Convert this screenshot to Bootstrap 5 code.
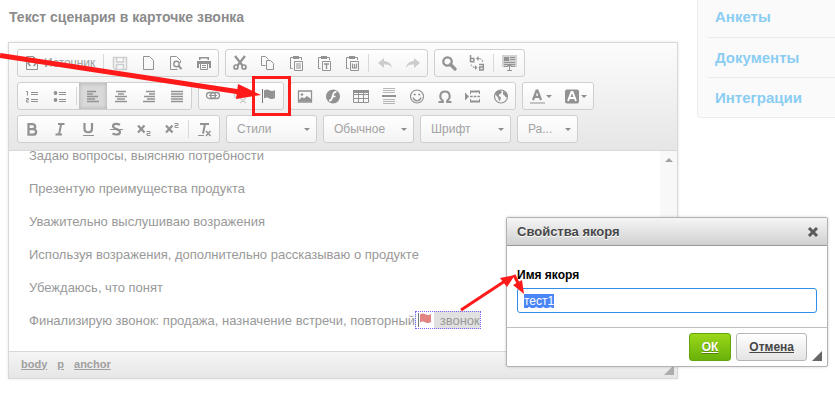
<!DOCTYPE html>
<html lang="ru">
<head>
<meta charset="utf-8">
<meta name="viewport" content="width=device-width, initial-scale=1">
<title>Текст сценария</title>
<link href="https://cdn.jsdelivr.net/npm/bootstrap@5.3.0/dist/css/bootstrap.min.css" rel="stylesheet">
<style>
body{font-family:"Liberation Sans",Arial,sans-serif;font-size:13px;line-height:20px;color:#999;background:#fff;overflow:hidden}
.scene{gap:19px;padding-left:8px;min-height:400px}
.page-title{font-size:14px;line-height:20px;font-weight:700;color:#8c8c8c;margin:7px 0 15px 1px}
.editor{border:1px solid #d8d8d8;box-shadow:0 0 3px rgba(0,0,0,.1)}
.tools{background:linear-gradient(#fcfcfc,#e6e6e6);border-bottom:1px solid #d8d8d8;padding:6px 8px 7px;row-gap:5px}
.tool-row{gap:6px}
.tool-group{display:flex;align-items:center;height:28px;border:1px solid #cfcfcf;border-radius:3px;background:linear-gradient(#fff,#f3f3f3);overflow:hidden}
.tool{border:0;padding:0 6px;height:26px;background:none;color:#929292;display:flex;align-items:center;font-size:12px}
.tool svg{width:16px;height:16px;flex:none}
.tool.active-tool{background:#d9d9d9;box-shadow:inset 0 0 4px #aaa}
.tool.faded{color:#cdcdcd}
.tool.source-tool{gap:4px;width:83px;color:#a0a0a0}
.source-tool svg{color:#929292}
.tool-sep{width:1px;height:18px;background:#d9d9d9;margin:0 2px}
.tool .caret,.combo .caret{width:0;height:0;border:3px solid transparent;border-top-color:#8e8e8e;border-bottom:0}
.tool.color-tool{gap:1px;width:35px}
.combo{width:91px;height:28px;border:1px solid #cfcfcf;border-radius:3px;background:linear-gradient(#fff,#f3f3f3);color:#a3a3a3;padding:0 6px 0 10px;font-size:12px}
.combo.combo-short{width:61px}
.writing{height:200px;padding-left:20px;background:#fff}
.lines{margin-top:-5px}
.lines p{margin:0 0 13px}
.anchor-mark{border:1px dotted #7565ff;color:#999;padding-top:1px;background:linear-gradient(90deg,#fff 18px,#e1e1e1 18px)}
.anchor-mark svg{width:16px;height:16px;vertical-align:-3px;margin:0 3px 0 1px;color:#e28484}
.track{width:17px;background:#f8f8f8;padding-top:7px}
.track i{width:0;height:0;border:4px solid transparent;border-bottom-color:#a3a3a3;border-top:0}
.path-bar{height:27px;border-top:1px solid #d8d8d8;background:linear-gradient(#f5f5f5,#e6e6e6);padding:0 3px 3px 12px;font-size:11px;font-weight:700;gap:10px}
.path-bar a{color:#a0a0a0}
.grip{width:10px;height:10px;background:#adadad;clip-path:polygon(100% 0,100% 100%,0 100%)}
.side{width:138px;height:118px;background:#fafafa;border:1px solid #ececec;border-width:0 0 1px 1px;border-radius:0 0 0 4px;padding-left:9px}
.side a{display:block;height:40px;line-height:39px;padding-left:8px;border-bottom:1px solid #ececec;color:#8acdf3;font-size:15px;font-weight:700;text-decoration:none}
.side a:first-child{height:38px;line-height:34px}
.side a:last-child{border-bottom:0}
.anchor-dialog{position:absolute;left:506px;top:217px;width:322px;background:#fff;border:1px solid #b2b2b2;border-radius:2px;box-shadow:0 0 3px rgba(0,0,0,.18)}
.dialog-top{height:28px;background:linear-gradient(#f5f5f5,#cfd1cf);border-bottom:1px solid #999;padding:0 8px 0 10px}
.dialog-top h2{font-size:13px;line-height:18px;font-weight:700;color:#474747;margin:0;text-shadow:0 1px 0 #fff}
.close-x{border:0;background:none;padding:0;width:12px;height:12px;color:#5a5a5a}
.close-x svg{display:block;width:12px;height:12px}
.dialog-body{padding:20px 10px 14px}
.dialog-body label{display:block;color:#000;font-size:12px;font-weight:700;line-height:18px;margin-bottom:4px}
.dialog-body input{display:block;width:100%;height:25px;border:1px solid #308fe8;border-radius:3px;padding:0 6px;font-size:12px;outline:0;color:#000;text-decoration:underline wavy #e00040 1px}
.dialog-body input::selection{background:#4a86f7;color:#fff}
.dialog-foot{border-top:1px solid #bfbfbf;height:39px;gap:5px;padding:0 5px 0 0}
.dialog-btn{height:28px;font-size:12px;font-weight:700;text-decoration:underline;border-radius:3px;padding:0 12px;border:1px solid #b6b6b6;background:linear-gradient(#fff,#e4e4e4);color:#474747}
.dialog-btn.ok-btn{color:#fff;border-color:#62a60a;background:linear-gradient(#9ad717,#69b10b);text-shadow:0 1px 0 #55830c}
.dialog-foot .grip{background:#666;margin:18px 0 0}
.pointers{position:absolute;left:0;top:0;width:835px;height:400px;pointer-events:none}
</style>
</head>
<body>
<svg class="d-none" aria-hidden="true">
<symbol id="i-source" viewBox="0 0 16 16"><path d="M2.500 1.500h7l4 4v9h-11z M9.500 1.500v4h4" fill="none" stroke="currentColor"/><path d="M6.500 6 4 8.500 6.500 11M9.500 6 12 8.500 9.500 11" fill="none" stroke="currentColor" stroke-width="1.500"/></symbol>
<symbol id="i-save" viewBox="0 0 16 16"><path d="M1.500 2.500h13v12h-11l-2-2z M4.500 2.500v4.500h7v-4.500M4.500 14v-4.500h7v4.500" fill="none" stroke="currentColor" stroke-width="1.500"/></symbol>
<symbol id="i-new" viewBox="0 0 16 16"><path d="M3.500 1.500h6l4 4v9h-10z" fill="none" stroke="currentColor"/></symbol>
<symbol id="i-preview" viewBox="0 0 16 16"><path d="M12.500 8v-2.500l-4-4h-6v13h7" fill="none" stroke="currentColor"/><circle cx="8.500" cy="9" r="2.700" fill="none" stroke="currentColor" stroke-width="1.400"/><path d="m10.500 11 3 3" stroke="currentColor" stroke-width="2"/></symbol>
<symbol id="i-print" viewBox="0 0 16 16"><path d="M3 2h10v3h-1.500V3.500h-7V5H3zM1 6h14v7h-2V9H3v4H1z" fill="currentColor"/><path d="M4.500 8.500h7v6h-7z" fill="#fafafa" stroke="currentColor"/><path d="M6 10.500h4M6 12.500h4" stroke="currentColor"/></symbol>
<symbol id="i-cut" viewBox="0 0 16 16"><path d="m3 1 7.500 9.500M13 1 5.500 10.500" stroke="currentColor" stroke-width="2.200"/><circle cx="4" cy="12" r="2" fill="none" stroke="currentColor" stroke-width="1.700"/><circle cx="12" cy="12" r="2" fill="none" stroke="currentColor" stroke-width="1.700"/></symbol>
<symbol id="i-copy" viewBox="0 0 16 16"><path d="M5.500 10.500h-4v-9h4l3 3M6.500 5.500h4l3 3v6h-7z" fill="none" stroke="currentColor"/></symbol>
<symbol id="i-paste" viewBox="0 0 16 16"><path d="M5 2.500H2.500v11h2M11 2.500h2.500V5" fill="none" stroke="currentColor"/><path d="M5 1h6v3H5z" fill="currentColor"/><path d="M6.500 6.500h8v9h-8z" fill="#fafafa" stroke="currentColor"/><path d="M8 9h5M8 11h5M8 13h5" stroke="currentColor"/></symbol>
<symbol id="i-pastet" viewBox="0 0 16 16"><path d="M5 2.500H2.500v11h2M11 2.500h2.500V5" fill="none" stroke="currentColor"/><path d="M5 1h6v3H5z" fill="currentColor"/><path d="M6.500 6.500h8v9h-8z" fill="#fafafa" stroke="currentColor"/><path d="M8 9h5M10.500 9v5" stroke="currentColor" stroke-width="1.400"/></symbol>
<symbol id="i-pastew" viewBox="0 0 16 16"><path d="M5 2.500H2.500v11h2M11 2.500h2.500V5" fill="none" stroke="currentColor"/><path d="M5 1h6v3H5z" fill="currentColor"/><path d="M6.500 6.500h8v9h-8z" fill="#fafafa" stroke="currentColor"/><path d="M8.500 8.500v4.500h4v-4.500M10.500 9v4" fill="none" stroke="currentColor" stroke-width="1.200"/></symbol>
<symbol id="i-undo" viewBox="0 0 16 16"><path d="M1 8 7 3v3c4 0 7 2 8 7-2-3-4-4-8-3.500V13z" fill="currentColor"/></symbol>
<symbol id="i-find" viewBox="0 0 16 16"><circle cx="6.500" cy="6.500" r="4.200" fill="none" stroke="currentColor" stroke-width="2.300"/><path d="m9.500 9.500 4.500 4.500" stroke="currentColor" stroke-width="3.200" stroke-linecap="round"/></symbol>
<symbol id="i-replace" viewBox="0 0 16 16"><path d="M1.500 0v7.300M1.500 3.500h3.300v3.200h-3.300M10 9.500h4.300v6M14.300 12h-3.600v3h3.600" fill="none" stroke="currentColor" stroke-width="1.500"/><path d="M9 3.500c3 0 4.500 1 4.500 3.500M7 12.500c-3 0-4.500-1-5-3" fill="none" stroke="currentColor" stroke-dasharray="3 1"/><path d="M9.500 1v5L7 3.500zM6 10v5L8.500 12.500z" fill="currentColor"/></symbol>
<symbol id="i-selall" viewBox="0 0 16 16"><path d="M0 0h15v12H0z" fill="#d2d2d2"/><path d="M2 2h5v4H2z" fill="currentColor"/><path d="M8 2.500h5M8 4.500h5M2 7.500h11M2 9.500h11M2 11.500h4M9 11.500h4M5 15.500h5M7.500 11v4M5.500 10.500h4" stroke="currentColor"/></symbol>
<symbol id="i-ol" viewBox="0 0 16 16"><path d="M2 3.500h1.500v4M2 10.500h2.500v1.500h-2v2H5M7 4.500h7M7 6.500h7M7 11.500h7M7 13.500h7" fill="none" stroke="currentColor"/></symbol>
<symbol id="i-ul" viewBox="0 0 16 16"><circle cx="3.500" cy="5" r="1.900" fill="currentColor"/><circle cx="3.500" cy="12" r="1.900" fill="currentColor"/><path d="M7 4.500h7M7 6.500h7M7 11.500h7M7 13.500h7" stroke="currentColor"/></symbol>
<symbol id="i-left" viewBox="0 0 16 16"><path d="M2 3.500h9M2 6h6M2 8.500h11M2 11h8M2 13.500h12" stroke="currentColor" stroke-width="1.500"/></symbol>
<symbol id="i-center" viewBox="0 0 16 16"><path d="M3 3.500h10M5 6h6M2 8.500h12M4 11h8M2 13.500h12" stroke="currentColor" stroke-width="1.500"/></symbol>
<symbol id="i-right" viewBox="0 0 16 16"><path d="M5 3.500h9M8 6h6M3 8.500h11M6 11h8M2 13.500h12" stroke="currentColor" stroke-width="1.500"/></symbol>
<symbol id="i-full" viewBox="0 0 16 16"><path d="M2 3.500h12M2 6h12M2 8.500h12M2 11h12M2 13.500h12" stroke="currentColor" stroke-width="1.500"/></symbol>
<symbol id="i-link" viewBox="0 0 16 16"><rect x="1.500" y="4.500" width="9" height="6" rx="3" fill="none" stroke="currentColor" stroke-width="1.300"/><rect x="5.500" y="4.500" width="9" height="6" rx="3" fill="none" stroke="currentColor" stroke-width="1.300"/><path d="M4 7.500h8" stroke="currentColor"/></symbol>
<symbol id="i-unlink" viewBox="0 0 16 16"><path d="M7 5H4a2.500 2.500 0 0 0 0 5h2M9 5h3a2.500 2.500 0 0 1 2 4M7 10l6 5M13 10l-6 5" fill="none" stroke="currentColor" stroke-width="1.300"/></symbol>
<symbol id="i-flag" viewBox="0 0 16 16"><path d="M1.500 1v14" stroke="#777" stroke-width="1"/><path d="M3 2.500c2-1.700 4-1 5.500-.3s3.500 1.200 5.500-.2v8c-2 1.400-4 1.200-5.500.5S5 8.800 3 10.500z" fill="currentColor"/></symbol>
<symbol id="i-image" viewBox="0 0 16 16"><path d="M1.500 3h13v11h-13z" fill="none" stroke="currentColor" stroke-width="1.300"/><path d="m2 12 3-3 2 1.500L10 8l4 3v2.500H2z" fill="currentColor"/><circle cx="5" cy="6.500" r="1.300" fill="currentColor"/></symbol>
<symbol id="i-flash" viewBox="0 0 16 16"><circle cx="8" cy="8.500" r="7" fill="currentColor"/><path d="M11.500 4c-3-.500-3.500 2.500-4 4.500S6 13 4 12.500M7 8.500h3.500" stroke="#fff" stroke-width="1.700" fill="none"/></symbol>
<symbol id="i-table" viewBox="0 0 16 16"><path d="M.5 2.500h15v12H.5zM.5 6.500h15M.5 10.500h15M5.500 5v9.500M10.500 5v9.500" fill="none" stroke="currentColor"/><path d="M0 2h16v3H0z" fill="currentColor"/></symbol>
<symbol id="i-hr" viewBox="0 0 16 16"><path d="M2 .5h12M2 2.500h12M2 4.500h12M2 11.500h12M2 13.500h12M2 15.500h12" stroke="currentColor" stroke-opacity=".65"/><path d="M1 8h14" stroke="currentColor" stroke-width="2"/></symbol>
<symbol id="i-smile" viewBox="0 0 16 16"><circle cx="8" cy="8.500" r="6.500" fill="none" stroke="currentColor" stroke-width="1.200"/><path d="M4 9.500c1.500 4.500 6.500 4.500 8 0" fill="none" stroke="currentColor" stroke-width="1.300"/><circle cx="5.700" cy="6.500" r="1.100" fill="currentColor"/><circle cx="10.300" cy="6.500" r="1.100" fill="currentColor"/></symbol>
<symbol id="i-omega" viewBox="0 0 16 16"><path d="M1.500 14h4.300v-1.300C1.500 9.500 3 3.500 8 3.500s6.500 6 2.200 9.200V14h4.300" fill="none" stroke="currentColor" stroke-width="2"/></symbol>
<symbol id="i-break" viewBox="0 0 16 16"><path d="m0 4.500 4 4-4 4z" fill="currentColor"/><path d="M5 3.500h10M5 13.500h10" stroke="currentColor" stroke-width="2"/><path d="M5.500 6v-2M14.500 6v-2M5.500 11v2M14.500 11v2" stroke="currentColor"/><path d="M5 8.500h10" stroke="currentColor" stroke-width="1.500" stroke-dasharray="2.700 1"/></symbol>
<symbol id="i-globe" viewBox="0 0 16 16"><circle cx="8" cy="8.500" r="6.500" fill="none" stroke="currentColor" stroke-width="1.200"/><path d="M2 6c1-2.500 3-4 5-4l2 2-1 1.500-2 1V8l2 1.500-1 3.500-1-.500L5 9.500zM10 3l3 1.500 1.500 4-1.500 1-1.500-2-1.500-1z" fill="currentColor"/></symbol>
<symbol id="i-close" viewBox="0 0 12 12"><path d="m2 2 8 8M10 2l-8 8" stroke="currentColor" stroke-width="3"/></symbol>
<symbol id="i-bold" viewBox="0 0 16 16"><path d="M4.500 3.200H8c4.200 0 4.200 4.900 0 4.900H4.500zM4.500 8.100H9c4.300 0 4 5.500 0 5.500H4.500z" fill="none" stroke="currentColor" stroke-width="2.300"/></symbol>
<symbol id="i-italic" viewBox="0 0 16 16"><path d="M6 3h6.500M3.500 13.500h6.500M9.200 3 7 13.500" stroke="currentColor" stroke-width="2"/></symbol>
<symbol id="i-under" viewBox="0 0 16 16"><path d="M4.500 2v5.500c0 5 7.500 5 7.500 0V2" fill="none" stroke="currentColor" stroke-width="2.200"/><path d="M3 14.500h11" stroke="currentColor"/></symbol>
<symbol id="i-strike" viewBox="0 0 16 16"><path d="M12 3.800C9 2.300 5 2.300 5 5.300S12 8 12 11 7.500 14 4.500 12.500" fill="none" stroke="currentColor" stroke-width="2.200"/><path d="M2 8.500h13" stroke="currentColor" stroke-width="1.200"/></symbol>
<symbol id="i-sub" viewBox="0 0 16 16"><path d="m2 4.500 6.500 7M8.500 4.500l-6.500 7" stroke="currentColor" stroke-width="2.200"/><path d="M10.500 10.500h3.500v2h-3v2h3.500" fill="none" stroke="currentColor"/></symbol>
<symbol id="i-sup" viewBox="0 0 16 16"><path d="m2 4.500 6.500 7M8.500 4.500l-6.500 7" stroke="currentColor" stroke-width="2.200"/><path d="M10.500 2.500h3.500v2h-3v2h3.500" fill="none" stroke="currentColor"/></symbol>
<symbol id="i-clear" viewBox="0 0 16 16"><path d="M3 3h9M8 3 6 12.500" stroke="currentColor" stroke-width="2"/><path d="M1 14.500h6" stroke="currentColor"/><path d="m9 10 4.500 5M13.500 10 9 15" stroke="currentColor" stroke-width="1.400"/></symbol>
<symbol id="i-tcolor" viewBox="0 0 16 16"><path d="m4 12 3.500-9.500h1l3.500 9.500M5 8.800h6" fill="none" stroke="currentColor" stroke-width="2.200"/><path d="M1 15h15" stroke="#c4c4c4" stroke-width="2"/></symbol>
<symbol id="i-bcolor" viewBox="0 0 16 16"><rect x="1" y="1.500" width="14" height="14" rx="2" fill="currentColor"/><path d="m4 13 3.500-9h1l3.500 9M5.500 10h5" fill="none" stroke="#fff" stroke-width="1.900"/></symbol>
</svg>

<div class="scene d-flex align-items-start position-relative">
<main class="flex-fill">
<h1 class="page-title">Текст сценария в карточке звонка</h1>
<section class="editor" aria-label="Редактор">
<div class="tools d-flex flex-column" role="toolbar">
<div class="tool-row d-flex">
<div class="tool-group"><button class="tool source-tool"><svg><use href="#i-source"/></svg>Источник</button><span class="tool-sep"></span><button class="tool faded" aria-label="Сохранить"><svg><use href="#i-save"/></svg></button><button class="tool" aria-label="Новая страница"><svg><use href="#i-new"/></svg></button><button class="tool" aria-label="Просмотр"><svg><use href="#i-preview"/></svg></button><button class="tool" aria-label="Печать"><svg><use href="#i-print"/></svg></button></div>
<div class="tool-group"><button class="tool" aria-label="Вырезать"><svg><use href="#i-cut"/></svg></button><button class="tool" aria-label="Копировать"><svg><use href="#i-copy"/></svg></button><button class="tool" aria-label="Вставить"><svg><use href="#i-paste"/></svg></button><button class="tool" aria-label="Вставить текст"><svg><use href="#i-pastet"/></svg></button><button class="tool" aria-label="Вставить из Word"><svg><use href="#i-pastew"/></svg></button><span class="tool-sep"></span><button class="tool faded" aria-label="Отменить"><svg><use href="#i-undo"/></svg></button><button class="tool faded" aria-label="Повторить"><svg viewBox="0 0 16 16"><path d="M15 8 9 3v3c-4 0-7 2-8 7 2-3 4-4 8-3.500V13z" fill="currentColor"/></svg></button></div>
<div class="tool-group"><button class="tool" aria-label="Найти"><svg><use href="#i-find"/></svg></button><button class="tool" aria-label="Заменить"><svg><use href="#i-replace"/></svg></button><span class="tool-sep"></span><button class="tool" aria-label="Выделить все"><svg><use href="#i-selall"/></svg></button></div>
</div>
<div class="tool-row d-flex">
<div class="tool-group"><button class="tool" aria-label="Нумерованный список"><svg><use href="#i-ol"/></svg></button><button class="tool" aria-label="Маркированный список"><svg><use href="#i-ul"/></svg></button><span class="tool-sep"></span><button class="tool active-tool" aria-label="По левому краю"><svg><use href="#i-left"/></svg></button><button class="tool" aria-label="По центру"><svg><use href="#i-center"/></svg></button><button class="tool" aria-label="По правому краю"><svg><use href="#i-right"/></svg></button><button class="tool" aria-label="По ширине"><svg><use href="#i-full"/></svg></button></div>
<div class="tool-group"><button class="tool" aria-label="Ссылка"><svg><use href="#i-link"/></svg></button><button class="tool faded" aria-label="Убрать ссылку"><svg><use href="#i-unlink"/></svg></button><button class="tool" aria-label="Якорь"><svg><use href="#i-flag"/></svg></button></div>
<div class="tool-group"><button class="tool" aria-label="Изображение"><svg><use href="#i-image"/></svg></button><button class="tool" aria-label="Flash"><svg><use href="#i-flash"/></svg></button><button class="tool" aria-label="Таблица"><svg><use href="#i-table"/></svg></button><button class="tool" aria-label="Линия"><svg><use href="#i-hr"/></svg></button><button class="tool" aria-label="Смайлы"><svg><use href="#i-smile"/></svg></button><button class="tool" aria-label="Символ"><svg><use href="#i-omega"/></svg></button><button class="tool" aria-label="Разрыв страницы"><svg><use href="#i-break"/></svg></button><button class="tool" aria-label="IFrame"><svg><use href="#i-globe"/></svg></button></div>
<div class="tool-group"><button class="tool color-tool" aria-label="Цвет текста"><svg><use href="#i-tcolor"/></svg><span class="caret"></span></button><button class="tool color-tool" aria-label="Цвет фона"><svg><use href="#i-bcolor"/></svg><span class="caret"></span></button></div>
</div>
<div class="tool-row d-flex">
<div class="tool-group"><button class="tool" aria-label="Полужирный"><svg><use href="#i-bold"/></svg></button><button class="tool" aria-label="Курсив"><svg><use href="#i-italic"/></svg></button><button class="tool" aria-label="Подчеркнутый"><svg><use href="#i-under"/></svg></button><button class="tool" aria-label="Зачеркнутый"><svg><use href="#i-strike"/></svg></button><button class="tool" aria-label="Подстрочный"><svg><use href="#i-sub"/></svg></button><button class="tool" aria-label="Надстрочный"><svg><use href="#i-sup"/></svg></button><span class="tool-sep"></span><button class="tool" aria-label="Убрать форматирование"><svg><use href="#i-clear"/></svg></button></div>
<button class="combo d-flex align-items-center justify-content-between">Стили<span class="caret"></span></button>
<button class="combo d-flex align-items-center justify-content-between">Обычное<span class="caret"></span></button>
<button class="combo d-flex align-items-center justify-content-between">Шрифт<span class="caret"></span></button>
<button class="combo combo-short d-flex align-items-center justify-content-between">Ра...<span class="caret"></span></button>
</div>
</div>
<div class="writing d-flex overflow-hidden">
<div class="lines flex-fill">
<p>Задаю вопросы, выясняю потребности</p>
<p>Презентую преимущества продукта</p>
<p>Уважительно выслушиваю возражения</p>
<p>Используя возражения, дополнительно рассказываю о продукте</p>
<p>Убеждаюсь, что понят</p>
<p>Финализирую звонок: продажа, назначение встречи, повторный<span class="anchor-mark"><svg><use href="#i-flag"/></svg> звонок</span></p>
</div>
<div class="track d-flex justify-content-center"><i></i></div>
</div>
<div class="path-bar d-flex align-items-center"><a href="#">body</a><a href="#">p</a><a href="#">anchor</a><span class="grip ms-auto align-self-end"></span></div>
</section>
</main>
<nav class="side flex-shrink-0"><a href="#">Анкеты</a><a href="#">Документы</a><a href="#">Интеграции</a></nav>

<div class="anchor-dialog" role="dialog" aria-labelledby="dlg-title">
<div class="dialog-top d-flex align-items-center justify-content-between"><h2 id="dlg-title">Свойства якоря</h2><button class="close-x" aria-label="Закрыть"><svg><use href="#i-close"/></svg></button></div>
<div class="dialog-body"><label for="anchor-name">Имя якоря</label><input id="anchor-name" type="text" value="тест1" spellcheck="false"></div>
<div class="dialog-foot d-flex align-items-center justify-content-end"><button class="dialog-btn ok-btn">ОК</button><button class="dialog-btn">Отмена</button><span class="grip"></span></div>
</div>

<svg class="pointers" viewBox="0 0 835 400" aria-hidden="true">
<path d="M0 55.500 240 92" stroke="#ff1a1a" stroke-width="5"/><path d="m238 84 23 11-25 4z" fill="#ff1a1a"/>
<path d="M253.500 77.500h36v37h-36z" fill="none" stroke="#ff1a1a" stroke-width="3"/>
<path d="m461 310 44-29M514 275l6 12" stroke="#ff1a1a" stroke-width="3"/><path d="m500 278 15-3-8 12zM513 285l9-5 2 14z" fill="#ff1a1a"/>
</svg>
</div>
<script src="https://cdn.jsdelivr.net/npm/bootstrap@5.3.0/dist/js/bootstrap.bundle.min.js"></script>
<script>
const field = document.getElementById('anchor-name');
field.focus();
field.select();
</script>
</body>
</html>
